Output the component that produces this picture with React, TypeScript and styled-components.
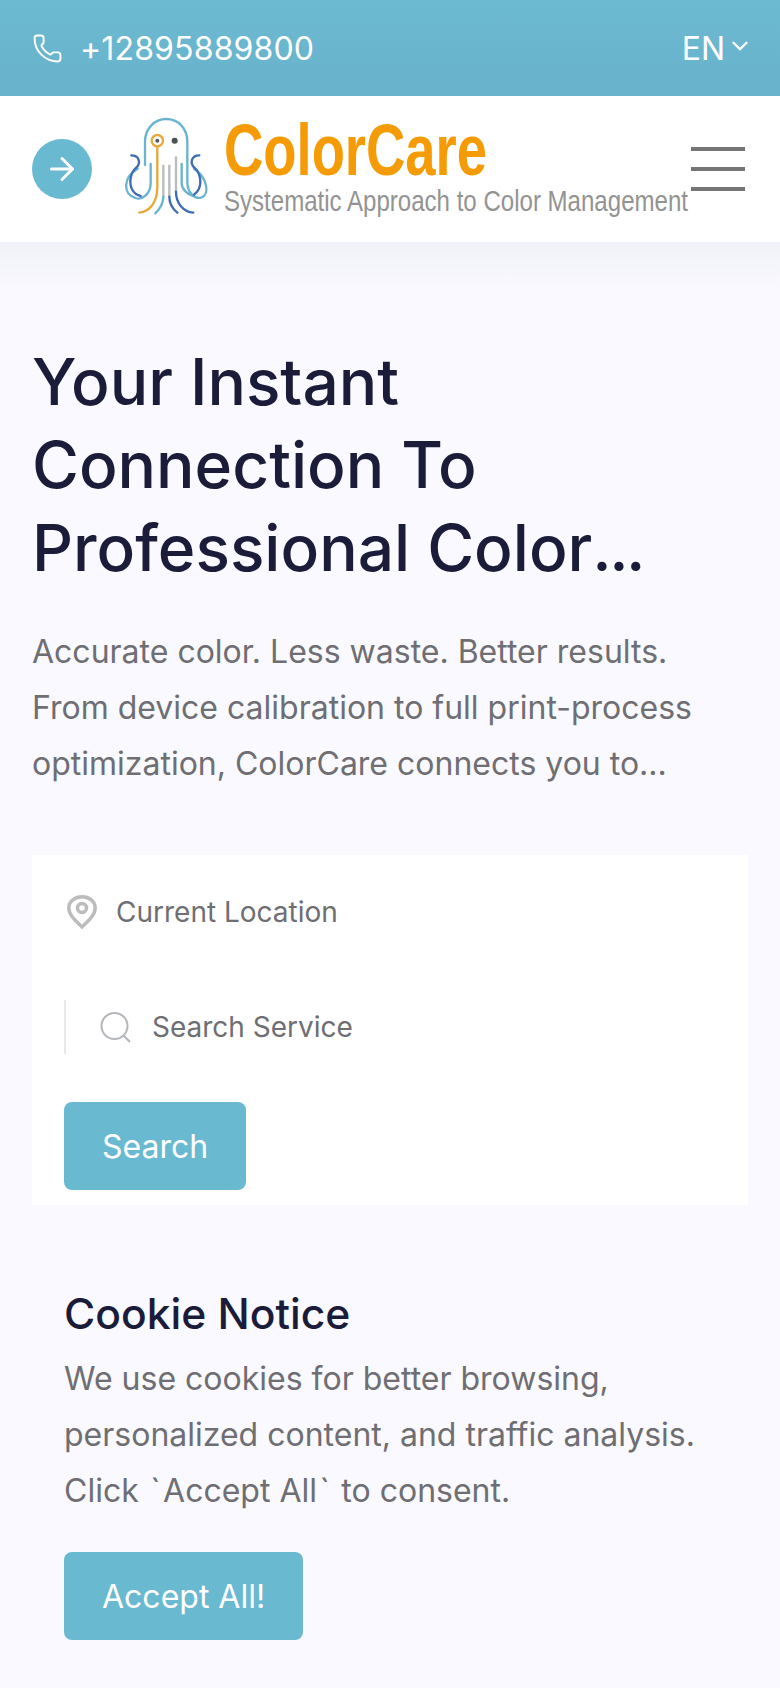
import React from "react";
import styled, { createGlobalStyle } from "styled-components";
import { ArrowRight, ChevronDown, Phone } from "lucide-react";

const GlobalStyle = createGlobalStyle`
  * { box-sizing: border-box; }
  html, body { margin: 0; padding: 0; }
  body {
    background: #f9f9ff;
    font-family: Inter, "Liberation Sans", sans-serif;
    overflow-x: hidden;
  }
`;

const App: React.FC = () => {
  return (
    <>
      <GlobalStyle />
      <Page>
        <TopBar>
          <PhoneLink>
            <Phone size={31} strokeWidth={1.5} />
            <span>+12895889800</span>
          </PhoneLink>
          <Lang>
            EN
            <ChevronDown size={26} strokeWidth={2.2} />
          </Lang>
        </TopBar>
        <Header>
          <BackCircle>
            <ArrowRight size={36} strokeWidth={2} />
          </BackCircle>
          <Logo />
          <Burger>
            <span />
            <span />
            <span />
          </Burger>
        </Header>
        <Main>
          <Title>
            Your Instant
            <br />
            Connection To
            <br />
            Professional Color<Dots>...</Dots>
          </Title>
          <Lead>
            Accurate color. Less waste. Better results.
            <br />
            From device calibration to full print-process
            <br />
            optimization, ColorCare connects you to...
          </Lead>
          <SearchCard>
            <LocationRow>
              <PinIcon />
              <span>Current Location</span>
            </LocationRow>
            <ServiceRow>
              <SearchIcon />
              <span>Search Service</span>
            </ServiceRow>
            <ActionButton>Search</ActionButton>
          </SearchCard>
          <Cookie>
            <CookieTitle>Cookie Notice</CookieTitle>
            <CookieText>
              We use cookies for better browsing,
              <br />
              personalized content, and traffic analysis.
              <br />
              Click <Tick>`</Tick>Accept All<Tick>`</Tick> to consent.
            </CookieText>
            <ActionButton>Accept All!</ActionButton>
          </Cookie>
        </Main>
      </Page>
    </>
  );
};

export default App;

const Logo: React.FC = () => (
  <LogoSvg viewBox="0 0 570 112" width="570" height="112">
    <g transform="translate(-20 -13) scale(0.3333)" fill="none" strokeWidth="7" strokeLinecap="round">
      <path stroke="#6ab4cf" d="M135 195V125C135 85 165 57 198 57C235 57 262 85 262 125V245C262 278 285 300 305 292C328 284 325 235 282 206" />
      <path stroke="#6ab4cf" d="M152 192V250C152 280 128 302 106 294C70 284 66 234 113 206" />
      <path stroke="#6ab4cf" d="M245 192V250C245 268 262 282 278 288" />
      <path stroke="#3f6db5" d="M94 166C118 166 124 190 108 204C92 218 86 246 96 268C102 280 112 286 122 288" />
      <path stroke="#3f6db5" d="M298 166C274 166 268 190 284 204C300 218 306 246 296 268C292 276 288 280 282 284" />
      <path stroke="#e8a93a" d="M172 140V262C172 305 150 335 118 338" />
      <circle stroke="#e8a93a" cx="172" cy="122" r="17" />
      <path stroke="#b9bcbf" d="M190 197V290" />
      <path stroke="#6ab4cf" d="M190 290C190 312 178 328 166 340" />
      <path stroke="#b9bcbf" d="M208 197V290" />
      <path stroke="#3f6db5" d="M208 290C208 312 220 328 232 338" />
      <path stroke="#b9bcbf" d="M228 172V275" />
      <path stroke="#3f6db5" d="M228 275C228 310 250 335 280 338" />
      <circle fill="#55585c" stroke="none" cx="172" cy="122" r="6" />
      <circle fill="#4c4f53" stroke="none" cx="224" cy="122" r="9" />
    </g>
    <LogoName x="104" y="62" textLength="263" lengthAdjust="spacingAndGlyphs">
      ColorCare
    </LogoName>
    <LogoTag x="104" y="98" textLength="464" lengthAdjust="spacingAndGlyphs">
      Systematic Approach to Color Management
    </LogoTag>
  </LogoSvg>
);

const PinIcon: React.FC = () => (
  <svg width="30" height="34" viewBox="0 0 30 34" fill="none" stroke="#bcbcbc" strokeWidth="3.5">
    <path d="M15 32C9 26 1.800 20 1.800 13C1.800 6 8 1.800 15 1.800C22 1.800 28.200 6 28.200 13C28.200 20 21 26 15 32Z" />
    <circle cx="15" cy="13" r="4.500" />
  </svg>
);

const SearchIcon: React.FC = () => (
  <svg width="31" height="31" viewBox="0 0 31 31" fill="none" stroke="#b4b7bb" strokeWidth="2">
    <circle cx="14.500" cy="14" r="13" />
    <path d="M24 24L30 30" />
  </svg>
);

const Page = styled.div`
  width: 780px;
  min-height: 1688px;
  background: #f9f9ff;
`;

const TopBar = styled.div`
  height: 96px;
  padding: 0 32px;
  display: flex;
  align-items: center;
  justify-content: space-between;
  background: linear-gradient(180deg, #6bbad1 0%, #69b2cc 100%);
  color: #fff;
  font-size: 32px;
`;

const PhoneLink = styled.div`
  display: flex;
  align-items: center;
  gap: 17px;
  letter-spacing: 0.15px;
`;

const Lang = styled.div`
  display: flex;
  align-items: center;
  gap: 2px;
  svg {
    margin-top: -4px;
    margin-right: -5px;
  }
`;

const Header = styled.header`
  height: 146px;
  padding: 0 35px 0 32px;
  display: flex;
  align-items: center;
  background: #fff;
`;

const BackCircle = styled.div`
  width: 60px;
  height: 60px;
  flex: none;
  border-radius: 50%;
  background: #69b9d1;
  color: #fff;
  display: flex;
  align-items: center;
  justify-content: center;
`;

const LogoSvg = styled.svg`
  flex: none;
  margin-left: 28px;
  overflow: visible;
`;

const LogoName = styled.text`
  font-family: "Liberation Sans", Arial, sans-serif;
  font-weight: 700;
  font-size: 72px;
  fill: #f59b05;
`;

const LogoTag = styled.text`
  font-family: "Liberation Sans", Arial, sans-serif;
  font-size: 30px;
  fill: #939393;
`;

const Burger = styled.div`
  margin-left: auto;
  width: 54px;
  flex: none;
  display: flex;
  flex-direction: column;
  gap: 16px;
  span {
    display: block;
    height: 4px;
    background: #757575;
  }
`;

const Main = styled.main`
  padding: 98px 32px 0;
  background: linear-gradient(180deg, #f1f1f8 0, #f9f9ff 50px);
`;

const Title = styled.h1`
  margin: 0;
  font-size: 64px;
  line-height: 83px;
  font-weight: 500;
  color: #1b1c3a;
`;

const Dots = styled.span`
  letter-spacing: -2.5px;
`;

const Lead = styled.p`
  margin: 35px 0 0;
  font-size: 32px;
  line-height: 56px;
  color: #6e6e73;
`;

const SearchCard = styled.section`
  margin-top: 63px;
  height: 350px;
  padding: 0 32px;
  background: #fff;
`;

const LocationRow = styled.div`
  height: 114px;
  padding-left: 3px;
  display: flex;
  align-items: center;
  gap: 19px;
  font-size: 28px;
  color: #6e6e73;
`;

const ServiceRow = styled.div`
  height: 54px;
  margin-top: 31px;
  padding-left: 34px;
  border-left: 2px solid #e8e8e8;
  display: flex;
  align-items: center;
  gap: 21px;
  font-size: 28px;
  color: #6e6e73;
`;

const ActionButton = styled.button`
  display: block;
  height: 88px;
  margin-top: 48px;
  padding: 0 38px;
  border: 0;
  border-radius: 8px;
  background: #69b9d1;
  color: #fff;
  font-family: inherit;
  font-size: 32px;
`;

const Cookie = styled.section`
  margin-top: 82px;
  padding: 0 32px;
  ${ActionButton} {
    margin-top: 33px;
  }
`;

const CookieTitle = styled.h2`
  margin: 0;
  font-size: 42.6px;
  line-height: 54px;
  font-weight: 500;
  color: #1b1c3a;
`;

const CookieText = styled.p`
  margin: 10px 0 0;
  font-size: 32px;
  line-height: 56px;
  color: #6e6e73;
`;

const Tick = styled.span`
  padding: 0 2.5px;
`;
